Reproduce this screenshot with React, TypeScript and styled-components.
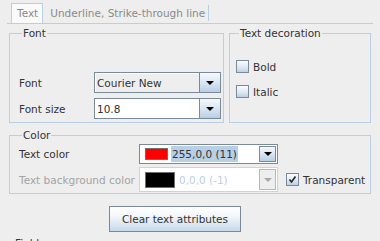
import React from "react";
import styled, { createGlobalStyle } from "styled-components";

const GlobalStyle = createGlobalStyle`
  html, body {
    margin: 0;
    padding: 0;
    background: #eeeeee;
  }
  body {
    font-family: "DejaVu Sans", "Liberation Sans", sans-serif;
    font-size: 10.5px;
    color: #333333;
  }
`;

const Page = styled.div`
  width: 380px;
  height: 241px;
  overflow: hidden;
`;

const TabBar = styled.div`
  display: flex;
  align-items: flex-end;
  height: 20px;
  margin: 0 7px;
  padding: 3px 0 0 4px;
  border-bottom: 1px solid #b8cfe5;
`;

const Tab = styled.div<{ $active?: boolean }>`
  height: ${({ $active }) => ($active ? "19px" : "16px")};
  line-height: ${({ $active }) => ($active ? "19px" : "16px")};
  padding: ${({ $active }) => ($active ? "0 4px 0 5px" : "0 3px 0 7px")};
  margin-bottom: ${({ $active }) => ($active ? "0" : "2px")};
  color: #8a8a8a;
  background: ${({ $active }) => ($active ? "#fafafa" : "transparent")};
  border: ${({ $active }) => ($active ? "1px solid #b8cfe5" : "none")};
  border-bottom: none;
  border-right: 1px solid #b8cfe5;
  white-space: nowrap;
`;

const Body = styled.div`
  padding: 3px 9px 0 9px;
`;

const TopRow = styled.div`
  display: flex;
  gap: 5px;
`;

const Group = styled.fieldset<{ $width?: number }>`
  margin: 0;
  min-width: 0;
  border: 1px solid #b8cfe5;
  ${({ $width }) => ($width ? `width: ${$width}px; flex: none;` : "flex: 1;")}
  box-sizing: border-box;
`;

const Legend = styled.legend`
  padding: 0 1px;
  margin-left: 3px;
  line-height: 13px;
  color: #333333;
`;

const FontGroup = styled(Group)`
  padding: 32px 2px 3px 9px;
  display: flex;
  flex-direction: column;
  gap: 5px;
`;

const DecorationGroup = styled(Group)`
  padding: 20px 6px 0 6px;
  display: flex;
  flex-direction: column;
  gap: 12px;
`;

const ColorGroup = styled(Group)`
  margin-top: 6px;
  padding: 2px 2px 1px 9px;
  display: flex;
  flex-direction: column;
  gap: 3px;
  width: 100%;
`;

const FormRow = styled.div`
  display: flex;
  align-items: center;
`;

const Label = styled.div<{ $width: number; $disabled?: boolean }>`
  width: ${({ $width }) => $width}px;
  flex: none;
  color: ${({ $disabled }) => ($disabled ? "#a3a3a3" : "#333333")};
  white-space: nowrap;
`;

const Combo = styled.div<{ $width: number; $height: number; $disabled?: boolean }>`
  width: ${({ $width }) => $width}px;
  height: ${({ $height }) => $height}px;
  box-sizing: border-box;
  display: flex;
  border: 1px solid ${({ $disabled }) => ($disabled ? "#c6d6e6" : "#7a8a99")};
  background: #ffffff;
`;

const ComboField = styled.div<{ $editable?: boolean }>`
  flex: 1;
  display: flex;
  align-items: center;
  padding-left: 2px;
  background: ${({ $editable }) => ($editable ? "#ffffff" : "#eeeeee")};
  box-shadow: ${({ $editable }) => ($editable ? "none" : "inset 1px 1px 0 #ffffff")};
  white-space: nowrap;
  overflow: hidden;
`;

const ArrowButton = styled.div`
  width: 20px;
  flex: none;
  display: flex;
  align-items: center;
  justify-content: center;
  border-left: 1px solid #7a8a99;
  background: linear-gradient(#f6f9fc 0%, #dde8f3 45%, #b8cfe5 100%);
`;

const InnerArrow = styled.div<{ $disabled?: boolean }>`
  width: 17px;
  margin: 1px;
  flex: none;
  box-sizing: border-box;
  display: flex;
  align-items: center;
  justify-content: center;
  border: 1px solid ${({ $disabled }) => ($disabled ? "#b8b8b8" : "#7a8a99")};
  background: ${({ $disabled }) =>
    $disabled ? "#eeeeee" : "linear-gradient(#f6f9fc 0%, #dde8f3 45%, #b8cfe5 100%)"};
`;

const ColorField = styled.div`
  flex: 1;
  display: flex;
  align-items: center;
  padding-left: 5px;
  gap: 3px;
  white-space: nowrap;
  overflow: hidden;
`;

const Swatch = styled.div<{ $color: string; $w: number; $h: number }>`
  width: ${({ $w }) => $w}px;
  height: ${({ $h }) => $h}px;
  box-sizing: border-box;
  flex: none;
  background: ${({ $color }) => $color};
  border: 1px solid #6e6e6e;
`;

const ColorValue = styled.span<{ $selected?: boolean; $disabled?: boolean }>`
  line-height: 16px;
  padding: 0 1px;
  color: ${({ $disabled }) => ($disabled ? "#b8cfe5" : "#333333")};
  background: ${({ $selected }) => ($selected ? "#b8cfe5" : "transparent")};
`;

const CheckRow = styled.label<{ $offset?: number }>`
  display: flex;
  align-items: center;
  gap: 4px;
  height: 13px;
  margin-left: ${({ $offset }) => $offset ?? 0}px;
  white-space: nowrap;
`;

const Box = styled.span`
  width: 13px;
  height: 13px;
  box-sizing: border-box;
  flex: none;
  display: flex;
  align-items: center;
  justify-content: center;
  border: 1px solid #7a8a99;
  background: linear-gradient(#fbfcfe 0%, #dfe9f3 55%, #bccfe2 100%);
`;

const ButtonRow = styled.div`
  padding: 12px 0 0 100px;
`;

const Button = styled.button`
  width: 132px;
  height: 26px;
  padding: 0;
  font: inherit;
  color: #333333;
  border: 1px solid #7a8a99;
  background: linear-gradient(#ffffff 0%, #f4f8fb 35%, #c8d9ea 100%);
`;

const Footer = styled.div`
  padding: 5px 0 0 6px;
  line-height: 13px;
`;

function Arrow({ disabled }: { disabled?: boolean }) {
  return (
    <svg width="8" height="4" viewBox="0 0 8 4">
      <polygon points="0,0 8,0 4,4" fill={disabled ? "#a8a8a8" : "#000000"} />
    </svg>
  );
}

function Checkbox({ label, checked, offset }: { label: string; checked?: boolean; offset?: number }) {
  return (
    <CheckRow $offset={offset}>
      <Box>
        {checked && (
          <svg width="9" height="9" viewBox="0 0 9 9">
            <path d="M1.5 4.5 L3.5 7 L7.5 1.5" fill="none" stroke="#222" strokeWidth="1.6" />
          </svg>
        )}
      </Box>
      {label}
    </CheckRow>
  );
}

export default function App() {
  return (
    <Page>
      <GlobalStyle />
      <TabBar>
        <Tab $active>Text</Tab>
        <Tab>Underline, Strike-through line</Tab>
      </TabBar>
      <Body>
        <TopRow>
          <FontGroup $width={215}>
            <Legend>Font</Legend>
            <FormRow>
              <Label $width={75}>Font</Label>
              <Combo $width={127} $height={21}>
                <ComboField>Courier New</ComboField>
                <ArrowButton>
                  <Arrow />
                </ArrowButton>
              </Combo>
            </FormRow>
            <FormRow>
              <Label $width={75}>Font size</Label>
              <Combo $width={127} $height={21}>
                <ComboField $editable>10.8</ComboField>
                <ArrowButton>
                  <Arrow />
                </ArrowButton>
              </Combo>
            </FormRow>
          </FontGroup>
          <DecorationGroup>
            <Legend>Text decoration</Legend>
            <Checkbox label="Bold" />
            <Checkbox label="Italic" />
          </DecorationGroup>
        </TopRow>
        <ColorGroup>
          <Legend>Color</Legend>
          <FormRow>
            <Label $width={120}>Text color</Label>
            <Combo $width={139} $height={20}>
              <ColorField>
                <Swatch $color="#ff0000" $w={23} $h={12} />
                <ColorValue $selected>255,0,0 (11)</ColorValue>
              </ColorField>
              <InnerArrow>
                <Arrow />
              </InnerArrow>
            </Combo>
          </FormRow>
          <FormRow>
            <Label $width={120} $disabled>
              Text background color
            </Label>
            <Combo $width={139} $height={25} $disabled>
              <ColorField>
                <Swatch $color="#000000" $w={30} $h={16} />
                <ColorValue $disabled>0,0,0 (-1)</ColorValue>
              </ColorField>
              <InnerArrow $disabled>
                <Arrow disabled />
              </InnerArrow>
            </Combo>
            <Checkbox label="Transparent" checked offset={8} />
          </FormRow>
        </ColorGroup>
        <ButtonRow>
          <Button>Clear text attributes</Button>
        </ButtonRow>
        <Footer>Fields</Footer>
      </Body>
    </Page>
  );
}
